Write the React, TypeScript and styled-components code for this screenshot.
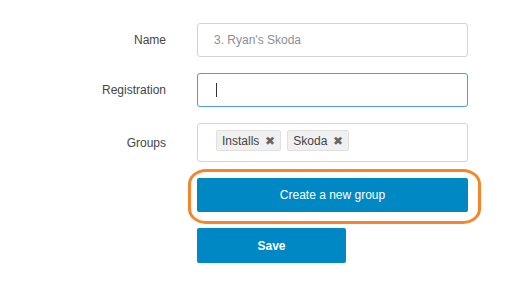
import * as React from "react";
import styled, { createGlobalStyle } from "styled-components";

const GlobalStyle = createGlobalStyle`
  body {
    margin: 0;
    background: #fff;
    font-family: "Liberation Sans", Arial, sans-serif;
  }
`;

const App: React.FC = () => {
  return (
    <>
      <GlobalStyle />
      <Form onSubmit={(e) => e.preventDefault()}>
        <Label>Name</Label>
        <TextBox>
          <Value>3. Ryan's Skoda</Value>
        </TextBox>

        <Label>Registration</Label>
        <TextBox focused>
          <Caret />
        </TextBox>

        <Label>Groups</Label>
        <TagBox>
          <Tag>
            Installs <Remove>✖</Remove>
          </Tag>
          <Tag>
            Skoda <Remove>✖</Remove>
          </Tag>
        </TagBox>

        <Spacer />
        <Highlight>
          <Button type="button">Create a new group</Button>
        </Highlight>

        <Spacer />
        <SaveButton type="submit">Save</SaveButton>
      </Form>
    </>
  );
};

export default App;

const Form = styled.form`
  display: grid;
  grid-template-columns: 166px 271px;
  column-gap: 31px;
  row-gap: 16px;
  align-items: center;
  padding-top: 23px;
`;

const Label = styled.label`
  text-align: right;
  font-size: 12px;
  color: #444;
`;

const Spacer = styled.div``;

const TextBox = styled.div<{ focused?: boolean }>`
  box-sizing: border-box;
  height: 34px;
  display: flex;
  align-items: center;
  padding: 0 16px;
  border: 1px solid ${(p) => (p.focused ? "#4a9fd8" : "#d4d4d4")};
  border-radius: 3px;
  background: #fff;
`;

const Value = styled.span`
  font-size: 12px;
  color: #8a8f94;
`;

const Caret = styled.span`
  display: block;
  width: 1px;
  height: 14px;
  margin-left: 2px;
  background: #333;
`;

const TagBox = styled.div`
  box-sizing: border-box;
  height: 39px;
  display: flex;
  align-items: flex-start;
  gap: 6px;
  padding: 6px 18px;
  border: 1px solid #d4d4d4;
  border-radius: 3px;
`;

const Tag = styled.span`
  box-sizing: border-box;
  height: 21px;
  display: inline-flex;
  align-items: center;
  gap: 6px;
  padding: 0 5px;
  background: #f0f0f0;
  border: 1px solid #e0e0e0;
  border-radius: 2px;
  font-size: 12px;
  color: #444;
`;

const Remove = styled.span`
  font-size: 12px;
  line-height: 1;
  color: #666;
`;

const Highlight = styled.div`
  position: relative;

  &::after {
    content: "";
    position: absolute;
    top: -9px;
    bottom: -12px;
    left: -9px;
    right: -13px;
    border: 3px solid #f7842a;
    border-radius: 18px / 15px;
    pointer-events: none;
  }
`;

const Button = styled.button`
  display: block;
  width: 100%;
  height: 34px;
  border: none;
  border-radius: 2px;
  background: #0088c4;
  color: #fff;
  font-family: inherit;
  font-size: 12px;
  cursor: pointer;
`;

const SaveButton = styled(Button)`
  width: 149px;
  height: 35px;
  font-weight: bold;
`;
